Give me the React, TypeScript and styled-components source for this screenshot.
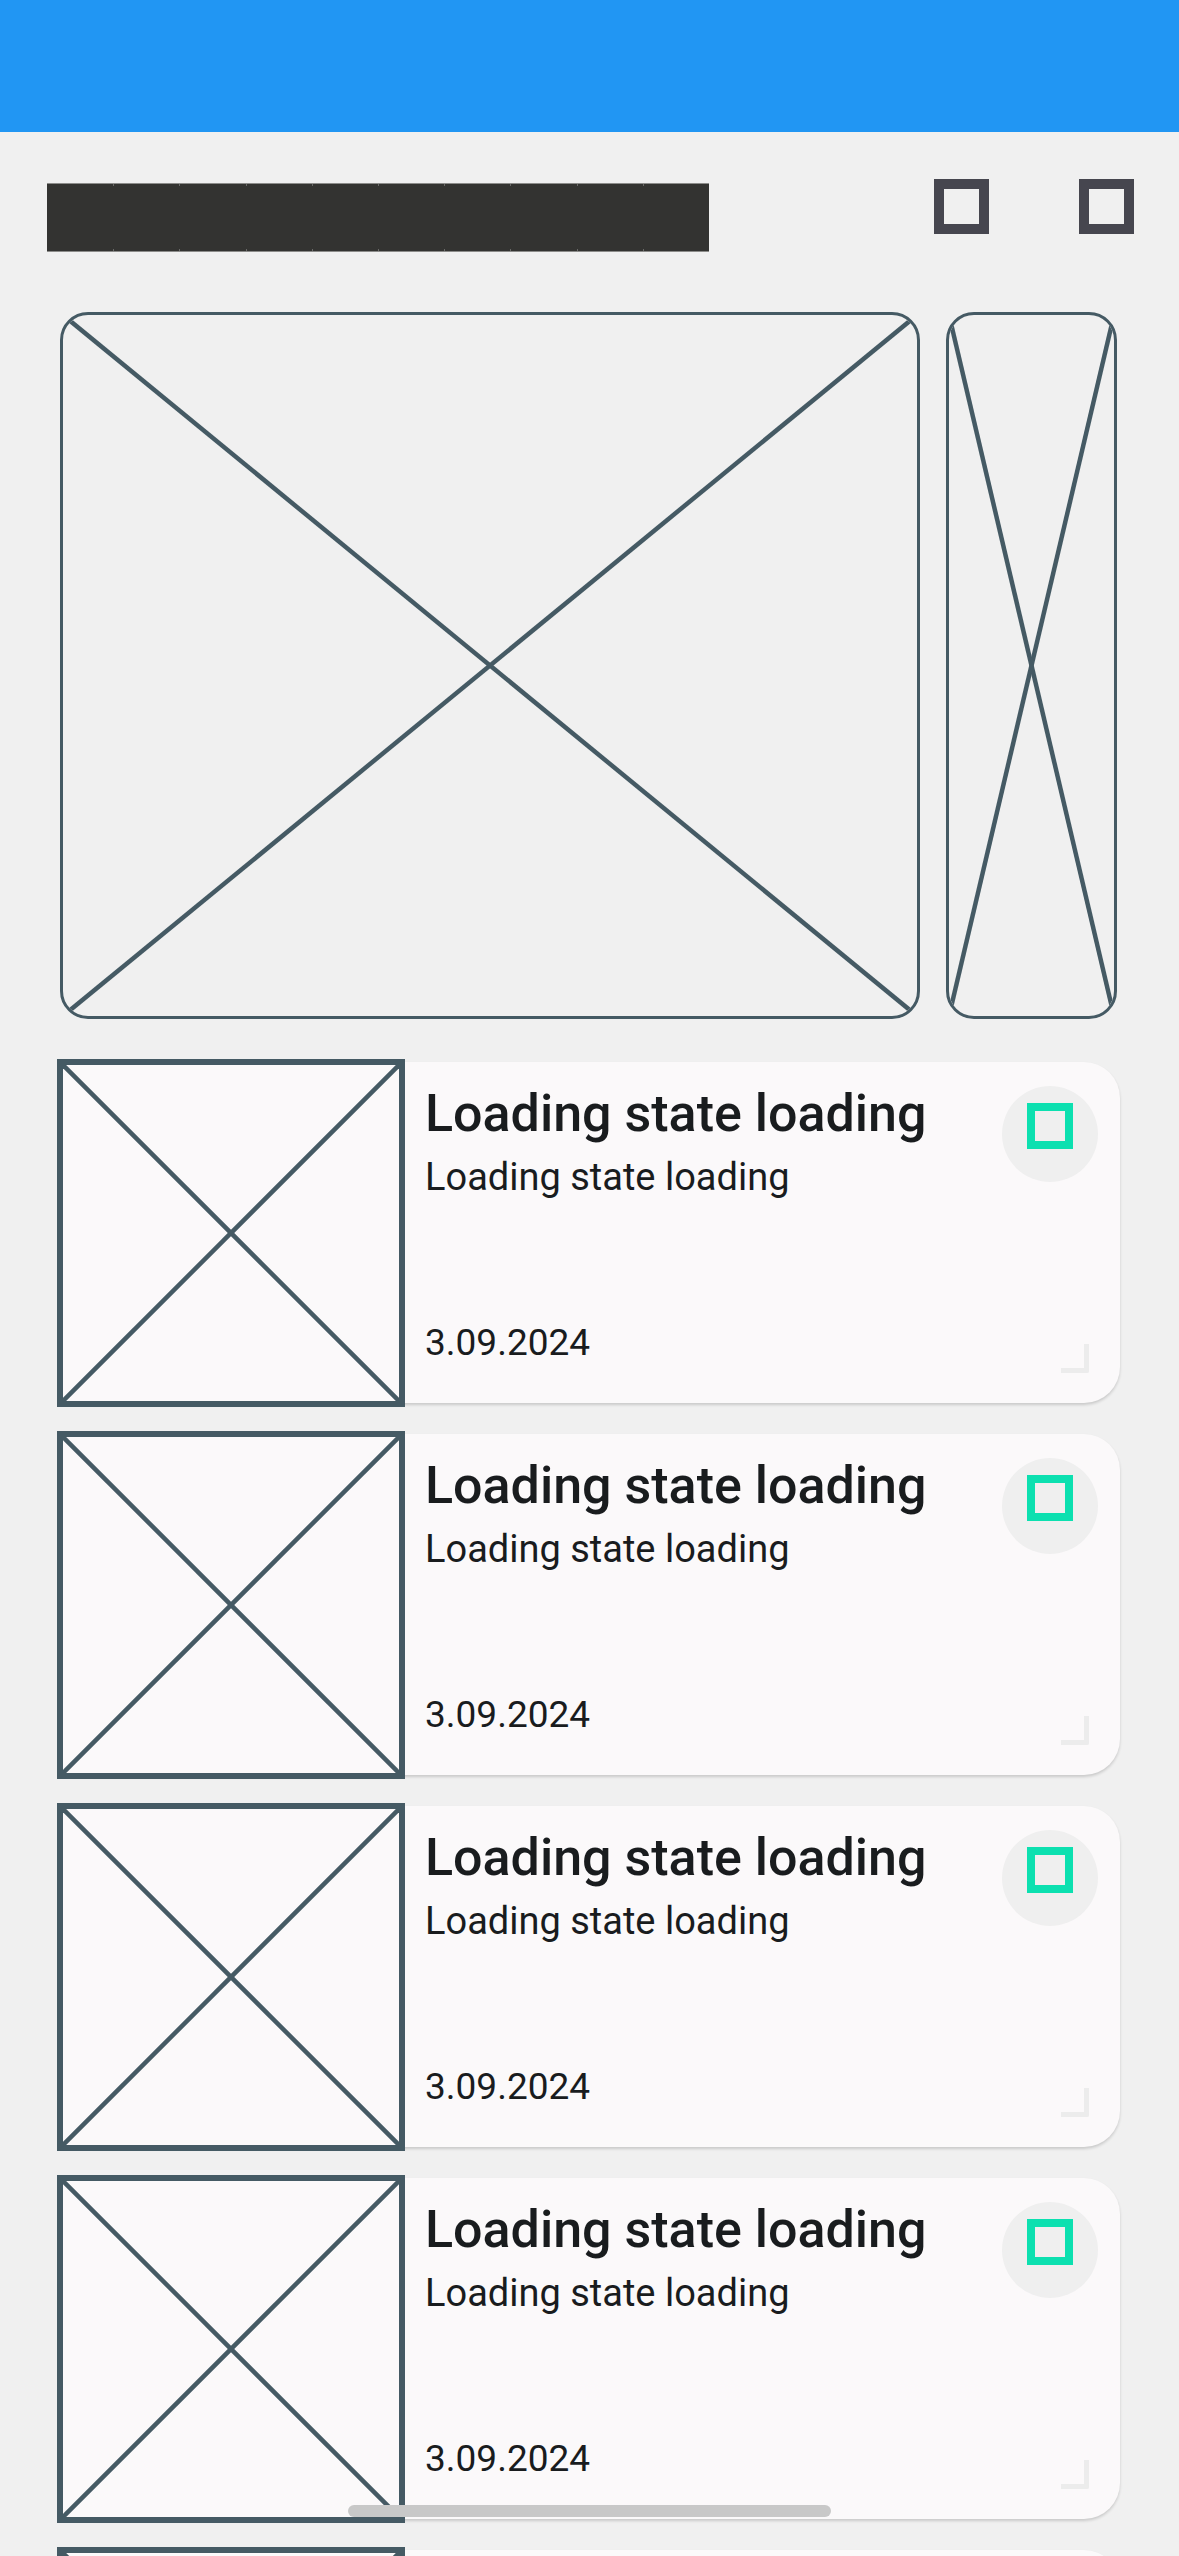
import React from "react";
import styled, { createGlobalStyle } from "styled-components";

const GlobalStyle = createGlobalStyle`
  html, body {
    margin: 0;
    padding: 0;
    background: #f0f0f0;
  }
  body {
    width: 1179px;
    height: 2556px;
    overflow: hidden;
    font-family: Roboto, "Noto Sans", "Liberation Sans", sans-serif;
  }
  * { box-sizing: border-box; }
`;

const Page = styled.div`
  position: relative;
  width: 1179px;
  height: 2556px;
  overflow: hidden;
  background: #f0f0f0;
  display: flex;
  flex-direction: column;
`;

const StatusBar = styled.header`
  height: 132px;
  flex: 0 0 132px;
  background: #2196f3;
`;

const TitleRow = styled.div`
  display: flex;
  align-items: flex-start;
  padding: 47px 45px 0 47px;
`;

const TitleBlocks = styled.div`
  display: flex;
  width: 662px;
  height: 69px;
  margin-top: 4px;
`;

const Glyph = styled.span`
  flex: 1;
  background:
    linear-gradient(#6a6a68, #6a6a68) left top / 1px 3px no-repeat,
    linear-gradient(#6a6a68, #6a6a68) left bottom / 1px 3px no-repeat,
    #333331;
  box-shadow: inset 0 1px 0 #8c8c8a, inset 0 -1px 0 #8c8c8a;
  &:first-child {
    background: #333331;
  }
`;

const Actions = styled.div`
  margin-left: auto;
  display: flex;
  gap: 90px;
`;

const SquareIcon = styled.span<{ $size: number; $stroke: number; $color: string }>`
  display: block;
  width: ${(p) => p.$size}px;
  height: ${(p) => p.$size}px;
  border: ${(p) => p.$stroke}px solid ${(p) => p.$color};
`;

const Carousel = styled.div`
  display: flex;
  gap: 26px;
  height: 707px;
  margin: 60px 62px 0 60px;
`;

const Placeholder = styled.div<{ $stroke: number; $radius: number; $bg: string }>`
  position: relative;
  border: ${(p) => p.$stroke}px solid #455a64;
  border-radius: ${(p) => p.$radius}px;
  overflow: hidden;
  background: ${(p) => p.$bg};
  svg {
    display: block;
    width: 100%;
    height: 100%;
  }
`;

const BigSlide = styled(Placeholder)`
  flex: 1;
`;

const SmallSlide = styled(Placeholder)`
  flex: 0 0 171px;
`;

const List = styled.div`
  display: flex;
  flex-direction: column;
  gap: 31px;
  margin: 43px 59px 0 60px;
`;

const Card = styled.div`
  display: flex;
  flex: 0 0 341px;
  height: 341px;
  background: #fbf9fa;
  border-radius: 36px;
  box-shadow: 0 2px 3px rgba(0, 0, 0, 0.16);
`;

const Thumb = styled(Placeholder)`
  flex: 0 0 348px;
  width: 348px;
  height: 348px;
  margin: -3px 0 -4px -3px;
`;

const TextCol = styled.div`
  flex: 1;
  display: flex;
  flex-direction: column;
  padding: 19px 0 36px 20px;
  color: #191c1e;
  min-width: 0;
`;

const Title = styled.div`
  font-size: 52px;
  line-height: 66px;
  font-weight: 500;
  white-space: nowrap;
`;

const Subtitle = styled.div`
  font-size: 38px;
  line-height: 56px;
  margin-top: 2px;
  font-weight: 400;
  white-space: nowrap;
`;

const DateText = styled.div`
  margin-top: auto;
  font-size: 37px;
  line-height: 48px;
  font-weight: 400;
`;

const SideCol = styled.div`
  display: flex;
  flex-direction: column;
  align-items: flex-end;
  padding: 24px 22px 30px 0;
`;

const IconButton = styled.button`
  width: 96px;
  height: 96px;
  border-radius: 50%;
  border: none;
  padding: 17px 0 0 0;
  background: #efefef;
  display: flex;
  align-items: flex-start;
  justify-content: center;
`;

const CornerMark = styled.span`
  margin-top: auto;
  margin-right: 9px;
  width: 28px;
  height: 29px;
  border-right: 5px solid #ececec;
  border-bottom: 5px solid #ececec;
  border-bottom-right-radius: 2px;
`;

const ScrollThumb = styled.div`
  position: absolute;
  left: 348px;
  top: 2505px;
  width: 483px;
  height: 12px;
  border-radius: 6px;
  background: #c8c8c8;
`;

const Cross: React.FC = () => (
  <svg viewBox="0 0 100 100" preserveAspectRatio="none">
    <line x1="0" y1="0" x2="100" y2="100" stroke="#455a64" strokeWidth={4.5} vectorEffect="non-scaling-stroke" />
    <line x1="100" y1="0" x2="0" y2="100" stroke="#455a64" strokeWidth={4.5} vectorEffect="non-scaling-stroke" />
  </svg>
);

const items = [0, 1, 2, 3, 4];

export default function App() {
  return (
    <>
      <GlobalStyle />
      <Page>
        <StatusBar />
        <TitleRow>
          <TitleBlocks>
            {Array.from({ length: 10 }).map((_, i) => (
              <Glyph key={i} />
            ))}
          </TitleBlocks>
          <Actions>
            <SquareIcon $size={55} $stroke={10} $color="#46464f" />
            <SquareIcon $size={55} $stroke={10} $color="#46464f" />
          </Actions>
        </TitleRow>
        <Carousel>
          <BigSlide $stroke={3} $radius={28} $bg="#f0f0f0">
            <Cross />
          </BigSlide>
          <SmallSlide $stroke={3} $radius={28} $bg="#f0f0f0">
            <Cross />
          </SmallSlide>
        </Carousel>
        <List>
          {items.map((i) => (
            <Card key={i}>
              <Thumb $stroke={6} $radius={0} $bg="#fbf9fa">
                <Cross />
              </Thumb>
              <TextCol>
                <Title>Loading state loading</Title>
                <Subtitle>Loading state loading</Subtitle>
                <DateText>3.09.2024</DateText>
              </TextCol>
              <SideCol>
                <IconButton aria-label="favorite">
                  <SquareIcon $size={46} $stroke={8} $color="#0ce0b0" />
                </IconButton>
                <CornerMark />
              </SideCol>
            </Card>
          ))}
        </List>
        <ScrollThumb />
      </Page>
    </>
  );
}
